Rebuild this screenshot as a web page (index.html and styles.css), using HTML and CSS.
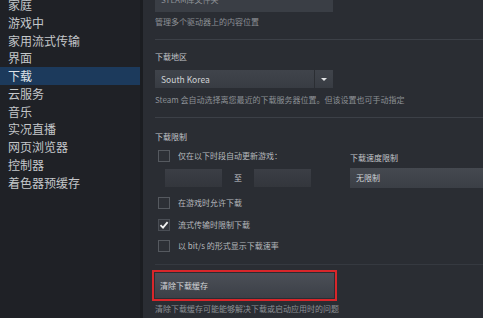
FILE: index.html
```html
<!DOCTYPE html>
<html>
<head>
    <title>设置 - 下载</title>
    <link rel="stylesheet" href="styles.css">
</head>
<body>
  <ul class="menu">
    <li>家庭</li>
    <li>游戏中</li>
    <li>家用流式传输</li>
    <li>界面</li>
    <li class="active">下载</li>
    <li>云服务</li>
    <li>音乐</li>
    <li>实况直播</li>
    <li>网页浏览器</li>
    <li>控制器</li>
    <li>着色器预缓存</li>
  </ul>

  <div class="main">
    <div class="top-btn">STEAM库文件夹</div>
    <div class="note note-top">管理多个驱动器上的内容位置</div>
    <div class="sep"></div>

    <div class="label label-region">下载地区</div>
    <div class="select">
      <span class="select-text">South Korea</span>
      <span class="select-arrow"></span>
    </div>
    <div class="note note-region">Steam 会自动选择离您最近的下载服务器位置。但该设置也可手动指定</div>
    <div class="sep sep-2"></div>

    <div class="label label-limit">下载限制</div>
    <div class="limits">
      <div class="limits-left">
        <div class="check-row">
          <span class="box"></span>
          <span>仅在以下时段自动更新游戏：</span>
        </div>
        <div class="times">
          <div class="time-input"></div>
          <span class="to">至</span>
          <div class="time-input"></div>
        </div>
      </div>
      <div class="limits-right">
        <div class="label">下载速度限制</div>
        <div class="speed">无限制</div>
      </div>
    </div>

    <div class="check-row row-2">
      <span class="box"></span>
      <span>在游戏时允许下载</span>
    </div>
    <div class="check-row row-3">
      <span class="box checked">
        <svg width="10" height="10" viewBox="0 0 10 10"><path d="M1.5 5.2 L4 7.6 L8.6 2.2" fill="none" stroke="#f2f2f2" stroke-width="1.8"/></svg>
      </span>
      <span>流式传输时限制下载</span>
    </div>
    <div class="check-row row-4">
      <span class="box"></span>
      <span>以 bit/s 的形式显示下载速率</span>
    </div>
    <div class="sep sep-3"></div>

    <div class="highlight">
      <div class="clear-btn">清除下载缓存</div>
    </div>
    <div class="note note-clear">清除下载缓存可能能够解决下载或启动应用时的问题</div>
  </div>
</body>
</html>
```

FILE: styles.css
```css
body {
  margin: 0;
  width: 483px;
  height: 318px;
  overflow: hidden;
  display: flex;
  background-color: #2a2d33;
  font-family: "Noto Sans CJK SC", "Noto Sans", sans-serif;
  color: #b9bcc0;
}

/* left menu */
.menu {
  list-style-type: none;
  margin: 0;
  padding: 0;
  width: 140px;
  flex-shrink: 0;
  background-color: #1f2126;
  border-right: 3px solid #1b1d21;
}

.menu li {
  height: 17.75px;
  line-height: 17.75px;
  padding-left: 8px;
  font-size: 12px;
  color: #c4c7ca;
  position: relative;
  top: -4px;
}

.menu li.active {
  background-color: #1c3a5c;
  color: #dfe3e8;
}

/* main panel */
.main {
  flex: 1;
  min-width: 0;
  padding-left: 12px;
  font-size: 8px;
  line-height: 12px;
}

.top-btn {
  width: 178px;
  height: 20px;
  margin-top: -8px;
  background-color: #3a3e45;
  color: #8e9297;
  font-size: 8px;
  line-height: 16px;
  padding-left: 6px;
  box-sizing: border-box;
}

.note {
  color: #8d9196;
}

.note-top {
  margin-top: 4px;
}

.sep {
  height: 1px;
  background-color: #3c4047;
  margin-top: 11px;
}

.label {
  color: #c2c5c9;
}

.label-region {
  margin-top: 11px;
}

.select {
  width: 178px;
  height: 18px;
  margin-top: 7px;
  background: linear-gradient(#40444b, #383c43);
  display: flex;
  align-items: center;
}

.select-text {
  padding-left: 6px;
  color: #cfd2d5;
  font-size: 8.5px;
  flex: 1;
}

.select-arrow {
  width: 18px;
  height: 18px;
  border-left: 1px solid #2b2e33;
  position: relative;
}

.select-arrow::after {
  content: "";
  position: absolute;
  left: 6px;
  top: 8px;
  border-left: 3px solid transparent;
  border-right: 3px solid transparent;
  border-top: 3px solid #e2e4e6;
}

.note-region {
  margin-top: 6px;
  white-space: nowrap;
}

.sep-2 {
  margin-top: 11px;
}

.label-limit {
  margin-top: 13px;
}

.limits {
  display: flex;
  margin-top: 7px;
}

.limits-left {
  width: 195px;
  flex-shrink: 0;
}

.limits-right {
  flex: 1;
  padding-top: 2px;
}

.check-row {
  display: flex;
  align-items: center;
  height: 12px;
  gap: 8px;
  padding-left: 3px;
  color: #b6b9bd;
}

.box {
  width: 12px;
  height: 12px;
  box-sizing: border-box;
  border: 1px solid #55595f;
  background-color: #2d3036;
  display: flex;
  align-items: center;
  justify-content: center;
}

.box.checked {
  border-color: #4a4e55;
  background-color: #33363c;
}

.times {
  display: flex;
  align-items: center;
  margin-top: 7px;
  padding-left: 10px;
}

.time-input {
  width: 57px;
  height: 18px;
  background: linear-gradient(#3b3e45, #33363c);
}

.to {
  width: 32px;
  text-align: center;
  color: #c8cbce;
}

.speed {
  height: 20px;
  margin-top: 4px;
  background: linear-gradient(#454950, #3b3f46);
  padding-left: 6px;
  line-height: 20px;
  color: #d0d3d6;
}

.row-2 {
  margin-top: 9px;
}

.row-3 {
  margin-top: 10px;
}

.row-4 {
  margin-top: 9px;
}

.sep-3 {
  margin-top: 12px;
  background-color: #353940;
}

.highlight {
  width: 185px;
  height: 31px;
  box-sizing: border-box;
  margin-top: 5px;
  margin-left: -3px;
  border: 2px solid #d8262a;
  padding: 1px;
}

.clear-btn {
  height: 25px;
  background: linear-gradient(#4b4f57, #3c4047);
  color: #d3d6d9;
  line-height: 25px;
  padding-left: 5px;
}

.note-clear {
  margin-top: 2px;
  white-space: nowrap;
}
```
